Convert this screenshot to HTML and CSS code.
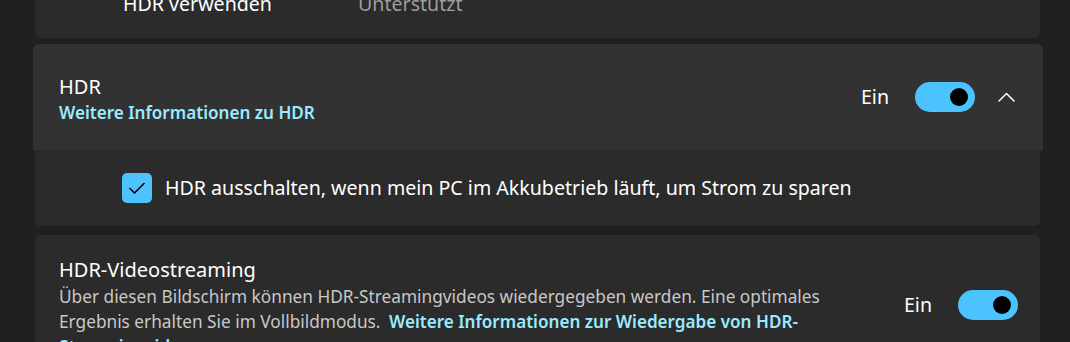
FILE: index.html
```html
<!DOCTYPE html>
<html lang="de">
<head>
    <meta charset="UTF-8">
    <meta name="viewport" content="width=device-width, initial-scale=1.0">
    <title>Anzeige – HDR</title>
    <link rel="stylesheet" href="styles.css">
</head>
<body>
    <div class="settings">
        <div class="card info-card">
            <div class="info-row">
                <span class="info-label">HDR verwenden</span>
                <span class="info-value">Unterstützt</span>
            </div>
        </div>

        <div class="expander">
            <div class="expander-header">
                <div class="setting-text">
                    <div class="setting-title">HDR</div>
                    <a class="link" href="#">Weitere Informationen zu HDR</a>
                </div>
                <div class="setting-control">
                    <span class="state">Ein</span>
                    <div class="toggle on"><span class="knob"></span></div>
                    <svg class="chevron" width="17" height="10" viewBox="0 0 17 10">
                        <path d="M1 9 L8.5 1.5 L16 9" fill="none" stroke="#ffffff" stroke-width="1.5" stroke-linecap="round" stroke-linejoin="round"/>
                    </svg>
                </div>
            </div>
            <div class="expander-body">
                <label class="check-row">
                    <span class="checkbox">
                        <svg width="30" height="30" viewBox="0 0 30 30">
                            <path d="M8 15.5 L12.5 20 L22 10.5" fill="none" stroke="#000000" stroke-width="1.6" stroke-linecap="round" stroke-linejoin="round"/>
                        </svg>
                    </span>
                    <span class="check-label">HDR ausschalten, wenn mein PC im Akkubetrieb läuft, um Strom zu sparen</span>
                </label>
            </div>
        </div>

        <div class="card setting-card">
            <div class="setting-text">
                <div class="setting-title">HDR-Videostreaming</div>
                <div class="setting-desc">Über diesen Bildschirm können HDR-Streamingvideos wiedergegeben werden. Eine optimales Ergebnis erhalten Sie im Vollbildmodus. <a class="link" href="#">Weitere Informationen zur Wiedergabe von HDR-Streamingvideos</a></div>
            </div>
            <div class="setting-control">
                <span class="state">Ein</span>
                <div class="toggle on"><span class="knob"></span></div>
            </div>
        </div>
    </div>
</body>
</html>
```

FILE: styles.css
```css
body {
    font-family: 'Noto Sans', sans-serif;
    background: #202020;
    color: #ffffff;
    margin: 0;
    overflow: hidden;
}
.settings {
    display: flex;
    flex-direction: column;
    width: 1005px;
    padding-left: 35px;
    margin-top: -10px;
}
.card {
    background: #2b2b2b;
    border-radius: 6px;
}
.info-card {
    padding: 0 0 20px 88px;
    margin-bottom: 6px;
}
.info-row {
    display: flex;
    font-size: 19.6px;
    line-height: 28px;
}
.info-label {
    width: 235px;
}
.info-value {
    color: #9d9d9d;
}
.expander {
    display: flex;
    flex-direction: column;
    margin-bottom: 9px;
}
.expander-header {
    display: flex;
    align-items: center;
    justify-content: space-between;
    height: 106px;
    box-sizing: border-box;
    margin: 0 -3px 0 -2px;
    padding: 0 28px 0 26px;
    background: #323232;
    border-radius: 6px 6px 0 0;
}
.expander-header .setting-text {
    margin-top: 4px;
}
.setting-title {
    font-size: 20px;
    line-height: 28px;
}
.link {
    color: #99ebff;
    font-size: 17.1px;
    font-weight: 600;
    line-height: 24px;
    text-decoration: none;
}
.setting-control {
    display: flex;
    align-items: center;
}
.state {
    font-size: 19.6px;
    line-height: 28px;
    margin-right: 26px;
}
.toggle {
    width: 60px;
    height: 30px;
    border-radius: 15px;
    background: #4cc2ff;
    display: flex;
    align-items: center;
    justify-content: flex-end;
    padding: 0 7px;
    box-sizing: border-box;
}
.knob {
    width: 18px;
    height: 18px;
    border-radius: 50%;
    background: #000000;
}
.chevron {
    margin-left: 23px;
    display: block;
}
.expander-body {
    background: #2b2b2b;
    border-radius: 0 0 6px 6px;
    height: 76px;
    display: flex;
    align-items: center;
    padding-left: 87px;
}
.check-row {
    display: flex;
    align-items: center;
}
.checkbox {
    width: 30px;
    height: 30px;
    border-radius: 5px;
    background: #4cc2ff;
    margin-right: 13px;
}
.checkbox svg {
    display: block;
}
.check-label {
    font-size: 19.6px;
    line-height: 28px;
}
.setting-card {
    display: flex;
    align-items: center;
    justify-content: space-between;
    padding: 21px 22px 21px 24px;
}
.setting-desc {
    width: 795px;
    font-size: 17.25px;
    line-height: 25px;
    color: #c8c8c8;
}
.setting-desc .link {
    font-size: 17.1px;
    line-height: 25px;
    margin-left: 4px;
}
.setting-card .setting-control {
    margin-top: -5px;
}
```
